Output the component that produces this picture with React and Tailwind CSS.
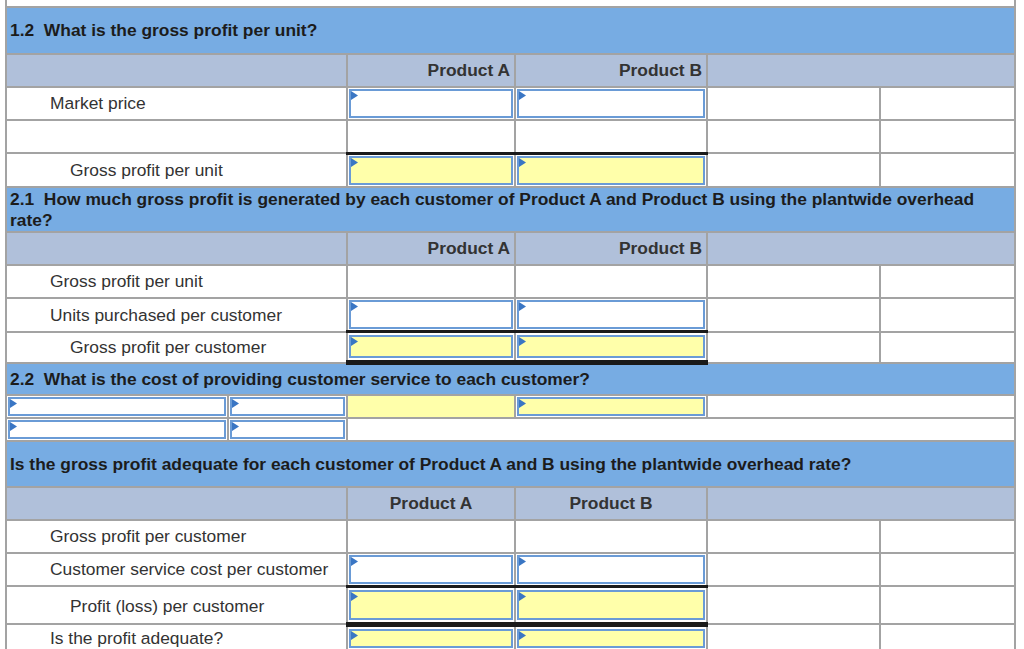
import React from "react";

const line = "border-2 border-[#a3a3a3]";

const Flag = () => (
    <svg className="absolute left-0 top-0" width="7" height="9" viewBox="0 0 7 9">
        <polygon points="0,0 7,4.5 0,9" fill="#3a76c4" />
    </svg>
);

// input box in a cell: white or yellow, blue frame, little flag on top-left
const Box = ({ yellow, h = "h-[29px]" }) => (
    <div className={`relative ${h} m-[1px] border-2 border-[#6a9bd6] ${yellow ? "bg-[#ffffaa]" : "bg-white"}`}>
        <Flag />
    </div>
);

const Header = ({ children, h, pad = "" }) => (
    <tr className={h}>
        <td colSpan={6} className={`${line} bg-[#77ace3] px-[3px] ${pad} text-[17.4px] leading-[21px] font-bold text-[#1c1c1c]`}>
            {children}
        </td>
    </tr>
);

const SubHeader = ({ center }) => (
    <tr className="h-[33px] bg-[#b0c0da]">
        <td colSpan={2} className={line}></td>
        <td className={`${line} px-[4px] font-bold text-[#333] ${center ? "text-center" : "text-right"}`}>Product A</td>
        <td className={`${line} px-[4px] font-bold text-[#333] ${center ? "text-center" : "text-right"}`}>Product B</td>
        <td colSpan={2} className={line}></td>
    </tr>
);

const Row = ({ label, indent, input, yellow, top, dbl, h = "h-[33px]", boxH, lpad = "" }) => {
    const cell = `${line} p-0 ${top ? "border-t-[3px] border-t-[#1a1a1a]" : ""} ${dbl ? "border-b-[5px] border-b-double border-b-[#1a1a1a]" : ""}`;
    return (
        <tr className={h}>
            <td colSpan={2} className={`${line} text-[#333] ${lpad} ${indent ? "pl-[63px]" : "pl-[43px]"}`}>{label}</td>
            <td className={cell}>{input && <Box yellow={yellow} h={boxH} />}</td>
            <td className={cell}>{input && <Box yellow={yellow} h={boxH} />}</td>
            <td className={line}></td>
            <td className={line}></td>
        </tr>
    );
};

const App = () => {
    return (
        <div className="bg-white w-[1024px] h-[649px] overflow-hidden font-['Liberation_Sans',Arial,sans-serif] text-[17.4px]">
            <table className="ml-[5px] w-[1009px] table-fixed border-collapse">
                <colgroup>
                    <col className="w-[222px]" />
                    <col className="w-[119px]" />
                    <col className="w-[168px]" />
                    <col className="w-[192px]" />
                    <col className="w-[173px]" />
                    <col className="w-[135px]" />
                </colgroup>
                <tbody>
                    <tr className="h-[7px]">
                        <td colSpan={6} className="border-x-2 border-b-2 border-[#a3a3a3]"></td>
                    </tr>

                    <Header h="h-[47px]">1.2&nbsp; What is the gross profit per unit?</Header>
                    <SubHeader />
                    <Row label="Market price" input />
                    <Row label="" />
                    <Row label="Gross profit per unit" indent input yellow top h="h-[34px]" boxH="h-[29px]" />

                    <Header h="h-[45px]">
                        2.1&nbsp; How much gross profit is generated by each customer of Product A and Product B using the plantwide overhead rate?
                    </Header>
                    <SubHeader />
                    <Row label="Gross profit per unit" />
                    <Row label="Units purchased per customer" input />
                    <Row label="Gross profit per customer" indent input yellow top dbl h="h-[31px]" boxH="h-[23px]" />

                    <Header h="h-[32px]">2.2&nbsp; What is the cost of providing customer service to each customer?</Header>
                    <tr className="h-[23px]">
                        <td className={`${line} p-0`}><Box h="h-[19px]" /></td>
                        <td className={`${line} p-0`}><Box h="h-[19px]" /></td>
                        <td className={`${line} bg-[#ffffaa]`}></td>
                        <td className={`${line} p-0`}><Box yellow h="h-[19px]" /></td>
                        <td colSpan={2} className={line}></td>
                    </tr>
                    <tr className="h-[23px]">
                        <td className={`${line} p-0`}><Box h="h-[19px]" /></td>
                        <td className={`${line} p-0`}><Box h="h-[19px]" /></td>
                        <td colSpan={4} className={line}></td>
                    </tr>

                    <Header h="h-[46px]" pad="pt-[2px]">Is the gross profit adequate for each customer of Product A and B using the plantwide overhead rate?</Header>
                    <SubHeader center />
                    <Row label="Gross profit per customer" />
                    <Row label="Customer service cost per customer" input />
                    <Row label="Profit (loss) per customer" indent input yellow top dbl h="h-[38px]" boxH="h-[30px]" lpad="pt-[3px]" />
                    <Row label="Is the profit adequate?" input yellow h="h-[23px]" boxH="h-[19px]" />
                </tbody>
            </table>
        </div>
    );
};

export default App;
